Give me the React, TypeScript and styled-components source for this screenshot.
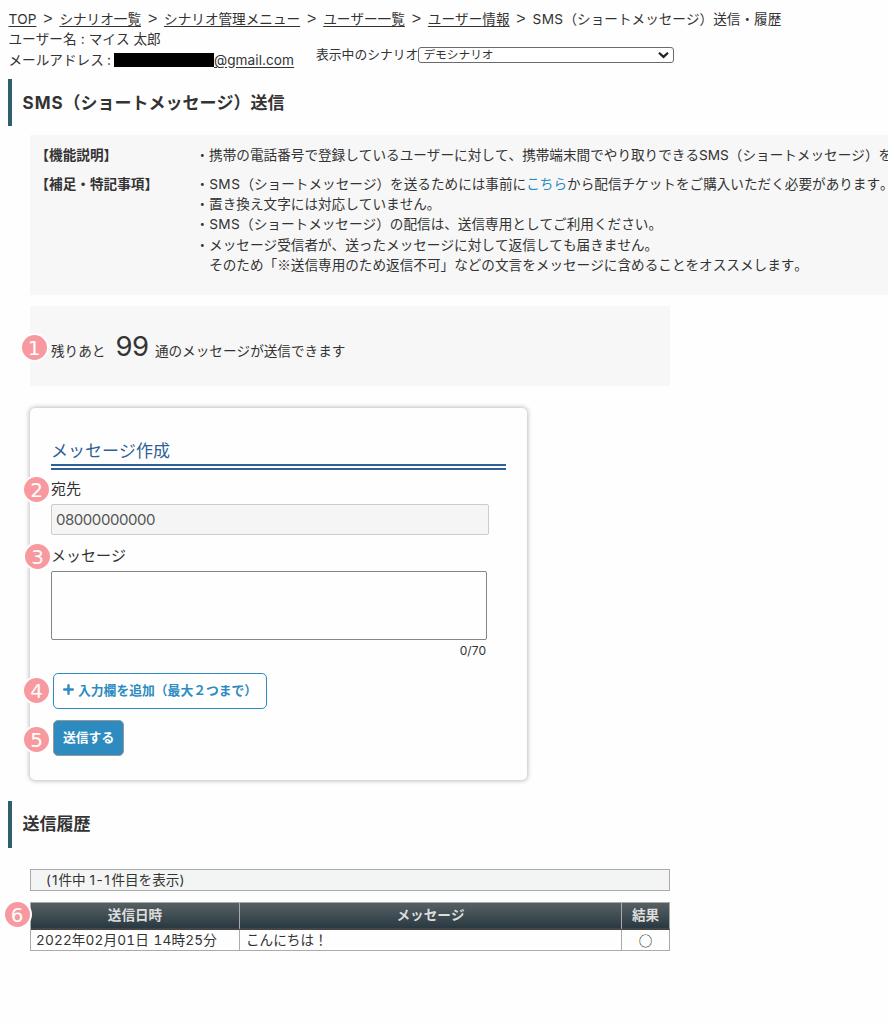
import React from "react";
import styled, { createGlobalStyle } from "styled-components";

const GlobalStyle = createGlobalStyle`
  *, *::before, *::after { box-sizing: border-box; }
  body {
    margin: 0;
    background: #fefefe;
    color: #333;
    font-family: Inter, "Noto Sans CJK JP", sans-serif;
    font-size: 13.61px;
    line-height: 20.3px;
    text-spacing-trim: space-all;
    font-kerning: none;
  }
  a { color: inherit; text-underline-offset: 2px; }
  input, textarea, select, button { font-family: inherit; color: inherit; margin: 0; }
`;

const Page = styled.div`
  width: 888px;
  height: 1024px;
  overflow: hidden;
  padding: 9px 0 0 8px;
  white-space: nowrap;
`;

const Breadcrumb = styled.nav`
  display: flex;
  height: 20.3px;
  padding-left: 0.5px;
`;

const Separator = styled.span`
  width: 23px;
  font-family: "Liberation Sans", sans-serif;
  font-size: 16px;
  text-align: center;
`;

const Header = styled.header`
  display: flex;
  height: 50px;
`;

const UserInfo = styled.div`
  width: 308px;
  padding-left: 0.5px;
`;

const UserLine = styled.div`
  display: flex;
  align-items: center;
  height: 20.3px;
`;

const Colon = styled.span<{ $width: number }>`
  width: ${(p) => p.$width}px;
  text-align: center;
`;

const Redacted = styled.span`
  width: 100px;
  height: 14px;
  background: #000;
`;

const MailLink = styled.a`
  letter-spacing: 0.07px;
`;

const ScenarioPicker = styled.label`
  display: flex;
  align-items: center;
  height: 16px;
  margin-top: 17.7px;
  font-size: 12.8px;
`;

const SelectBox = styled.span`
  display: flex;
  align-items: center;
  width: 256px;
  height: 16px;
  padding: 0 4px 0 4px;
  border: 1px solid #6b6b6b;
  border-radius: 3px;
  background: #fff;

  select {
    flex: 1;
    appearance: none;
    border: 0;
    padding: 0;
    height: 14px;
    line-height: 14px;
    background: transparent;
    font-size: 11.7px;
  }
`;

const SectionTitle = styled.h2`
  display: flex;
  align-items: center;
  height: 47px;
  margin: 0;
  padding-left: 10.5px;
  border-left: 4px solid #2f5f6e;
  font-size: 17px;
  font-weight: 700;
`;

const Latin = styled.span<{ $spacing: number }>`
  letter-spacing: ${(p) => p.$spacing}px;
`;

const Description = styled.dl`
  display: grid;
  grid-template-columns: 160px max-content;
  row-gap: 8.7px;
  align-content: start;
  height: 160px;
  margin: 8.3px 0 0 22px;
  padding: 10.2px 0 0 5.5px;
  background: #f7f7f7;

  dt { font-weight: 700; }
  dd { margin: 0; }
  a { color: #2b8cc8; text-decoration: none; }
`;

const ReferenceMark = styled.span`
  font-family: "Noto Sans CJK JP", sans-serif;
  line-height: 1;
`;

const Remaining = styled.section`
  position: relative;
  display: flex;
  align-items: baseline;
  width: 640px;
  height: 80.5px;
  margin: 11px 0 0 22px;
  padding: 25px 0 0 21px;
  background: #f7f7f7;

  strong {
    margin: 0 6.5px 0 10px;
    font-size: 27.5px;
    font-weight: 400;
    line-height: 30px;
    letter-spacing: -0.6px;
  }
`;

const Badge = styled.span<{ $left: number; $top: number }>`
  position: absolute;
  left: ${(p) => p.$left}px;
  top: ${(p) => p.$top}px;
  display: flex;
  align-items: center;
  justify-content: center;
  width: 29px;
  height: 29px;
  border: 2px solid #fff;
  border-radius: 50%;
  background: #f8999f;
  color: #fff;
  font: 20px/24px "DejaVu Sans", sans-serif;
`;

const Card = styled.form`
  display: flex;
  flex-direction: column;
  align-items: flex-start;
  width: 497px;
  height: 371.5px;
  margin: 22px 0 0 22px;
  padding: 29px 21px 0;
  border-radius: 5px;
  background: #fefefe;
  box-shadow: 0 0 4px 1px rgba(0, 0, 0, 0.25);
`;

const CardTitle = styled.h3`
  align-self: stretch;
  height: 33px;
  margin: 0;
  border-bottom: 6px double #2f5f98;
  color: #2f5f98;
  font-size: 17px;
  font-weight: 400;
  line-height: 28px;
`;

const Field = styled.div<{ $gap: number }>`
  position: relative;
  display: flex;
  flex-direction: column;
  margin-top: ${(p) => p.$gap}px;

  label {
    height: 22px;
    font-size: 15px;
    line-height: 22px;
  }
`;

const PhoneInput = styled.input`
  width: 438px;
  height: 31px;
  margin-top: 4px !important;
  padding: 0 4px;
  border: 1px solid #ccc;
  border-radius: 2px;
  background: #f5f5f5;
  color: #555 !important;
  font-size: 15px;
  letter-spacing: -0.45px;
`;

const MessageInput = styled.textarea`
  width: 436px;
  height: 69px;
  margin-top: 4px !important;
  border: 1px solid #858585;
  border-radius: 2px;
  background: #fefefe;
  resize: none;
`;

const Counter = styled.span`
  width: 435px;
  font-size: 12px;
  line-height: 21.3px;
  text-align: right;
`;

const Action = styled.div<{ $gap: number }>`
  position: relative;
  margin: ${(p) => p.$gap}px 0 0 2px;
`;

const Button = styled.button<{ $primary?: boolean }>`
  display: flex;
  align-items: center;
  gap: 4px;
  width: ${(p) => (p.$primary ? 71 : 214)}px;
  height: 36px;
  padding: 0 0 2px 9px;
  border: 1px solid ${(p) => (p.$primary ? "#999" : "#2d8bc0")};
  border-radius: 5px;
  background: ${(p) => (p.$primary ? "#2d8bc0" : "#fff")};
  color: ${(p) => (p.$primary ? "#fff" : "#2d8bc0")} !important;
  font-size: 12.8px;
  font-weight: 700;
  white-space: nowrap;
`;

const History = styled.section`
  margin-top: 21.5px;
`;

const ResultCount = styled.div`
  width: 640px;
  height: 22px;
  margin: 21px 0 0 22px;
  padding-left: 15px;
  border: 1px solid #aaa;
  background: #f3f5f4;
`;

const TableWrap = styled.div`
  position: relative;
  width: 640px;
  margin: 11px 0 0 22px;
`;

const Table = styled.table`
  width: 100%;
  table-layout: fixed;
  border-collapse: separate;
  border-spacing: 0;
  border: solid #aaa;
  border-width: 1px 0 0 1px;

  th, td {
    padding: 0 6px;
    border-right: 1px solid #aaa;
  }
  thead tr { background: linear-gradient(#566063, #26363f); }
  th {
    height: 27px;
    padding: 0;
    border-bottom: 2px solid #454545;
    color: #ddd;
    font-weight: 700;
  }
  td {
    height: 21px;
    border-bottom: 1px solid #aaa;
    line-height: 20px;
  }
  td:first-child {
    padding-left: 5px;
    font-variant-numeric: tabular-nums;
    letter-spacing: 0.14px;
    word-spacing: 0.8px;
  }
`;

const ResultCell = styled.td`
  text-align: center;
  color: #111;
  font-family: "Noto Sans CJK JP", sans-serif;
`;

const Chevron = () => (
  <svg width="11" height="8" viewBox="0 0 11 8" fill="none" stroke="#222" strokeWidth="2.2">
    <path d="M1 1.7 5.5 5.9 10 1.7" />
  </svg>
);

const Plus = () => (
  <svg width="11" height="11" viewBox="0 0 11 11" stroke="currentColor" strokeWidth="2.4" strokeLinecap="round">
    <path d="M5.5 1.2v8.6M1.2 5.5h8.6" />
  </svg>
);

const crumbs = ["TOP", "シナリオ一覧", "シナリオ管理メニュー", "ユーザー一覧", "ユーザー情報"];

export default function App() {
  return (
    <>
      <GlobalStyle />
      <Page>
        <Breadcrumb>
          {crumbs.map((c) => (
            <React.Fragment key={c}>
              <a href="#">{c}</a>
              <Separator>&gt;</Separator>
            </React.Fragment>
          ))}
          <span>
            <Latin $spacing={0.4}>SMS</Latin>（ショートメッセージ）送信・履歴
          </span>
        </Breadcrumb>
        <Header>
          <UserInfo>
            <UserLine>
              ユーザー名<Colon $width={12.2}>:</Colon>マイス 太郎
            </UserLine>
            <UserLine>
              メールアドレス<Colon $width={10.2}>:</Colon>
              <Redacted />
              <MailLink href="#">@gmail.com</MailLink>
            </UserLine>
          </UserInfo>
          <ScenarioPicker>
            表示中のシナリオ
            <SelectBox>
              <select>
                <option>デモシナリオ</option>
              </select>
              <Chevron />
            </SelectBox>
          </ScenarioPicker>
        </Header>

        <SectionTitle>
          <Latin $spacing={1}>SMS</Latin>（ショートメッセージ）送信
        </SectionTitle>
        <Description>
          <dt>【機能説明】</dt>
          <dd>・携帯の電話番号で登録しているユーザーに対して、携帯端末間でやり取りできるSMS（ショートメッセージ）を</dd>
          <dt>【補足・特記事項】</dt>
          <dd>
            ・<Latin $spacing={0.5}>SMS</Latin>（ショートメッセージ）を送るためには事前に<a href="#">こちら</a>から配信チケットをご購入いただく必要があります。
            <br />
            ・置き換え文字には対応していません。
            <br />
            ・<Latin $spacing={0.4}>SMS</Latin>（ショートメッセージ）の配信は、送信専用としてご利用ください。
            <br />
            ・メッセージ受信者が、送ったメッセージに対して返信しても届きません。
            <br />
            {"\u3000"}そのため「<ReferenceMark>※</ReferenceMark>送信専用のため返信不可」などの文言をメッセージに含めることをオススメします。
          </dd>
        </Description>

        <Remaining>
          <Badge $left={-10.5} $top={27.5}>1</Badge>
          残りあと<strong>99</strong>通のメッセージが送信できます
        </Remaining>

        <Card>
          <CardTitle>メッセージ作成</CardTitle>
          <Field $gap={8}>
            <Badge $left={-29} $top={-3}>2</Badge>
            <label>宛先</label>
            <PhoneInput readOnly value="08000000000" />
          </Field>
          <Field $gap={10}>
            <Badge $left={-28} $top={-3}>3</Badge>
            <label>メッセージ</label>
            <MessageInput />
            <Counter>0/70</Counter>
          </Field>
          <Action $gap={11.5}>
            <Badge $left={-31} $top={3.5}>4</Badge>
            <Button type="button">
              <Plus />
              入力欄を追加（最大２つまで）
            </Button>
          </Action>
          <Action $gap={11}>
            <Badge $left={-31} $top={5.5}>5</Badge>
            <Button type="button" $primary>送信する</Button>
          </Action>
        </Card>

        <History>
          <SectionTitle>送信履歴</SectionTitle>
          <ResultCount>
            <Latin $spacing={1}>(1</Latin>件中 <Latin $spacing={1.5}>1-1</Latin>件目を表示)
          </ResultCount>
          <TableWrap>
            <Table>
              <colgroup>
                <col style={{ width: 209 }} />
                <col />
                <col style={{ width: 48 }} />
              </colgroup>
              <thead>
                <tr>
                  <th>送信日時</th>
                  <th>メッセージ</th>
                  <th>結果</th>
                </tr>
              </thead>
              <tbody>
                <tr>
                  <td>2022年02月01日 14時25分</td>
                  <td>こんにちは！</td>
                  <ResultCell>○</ResultCell>
                </tr>
              </tbody>
            </Table>
            <Badge $left={-27.5} $top={-2}>6</Badge>
          </TableWrap>
        </History>
      </Page>
    </>
  );
}
